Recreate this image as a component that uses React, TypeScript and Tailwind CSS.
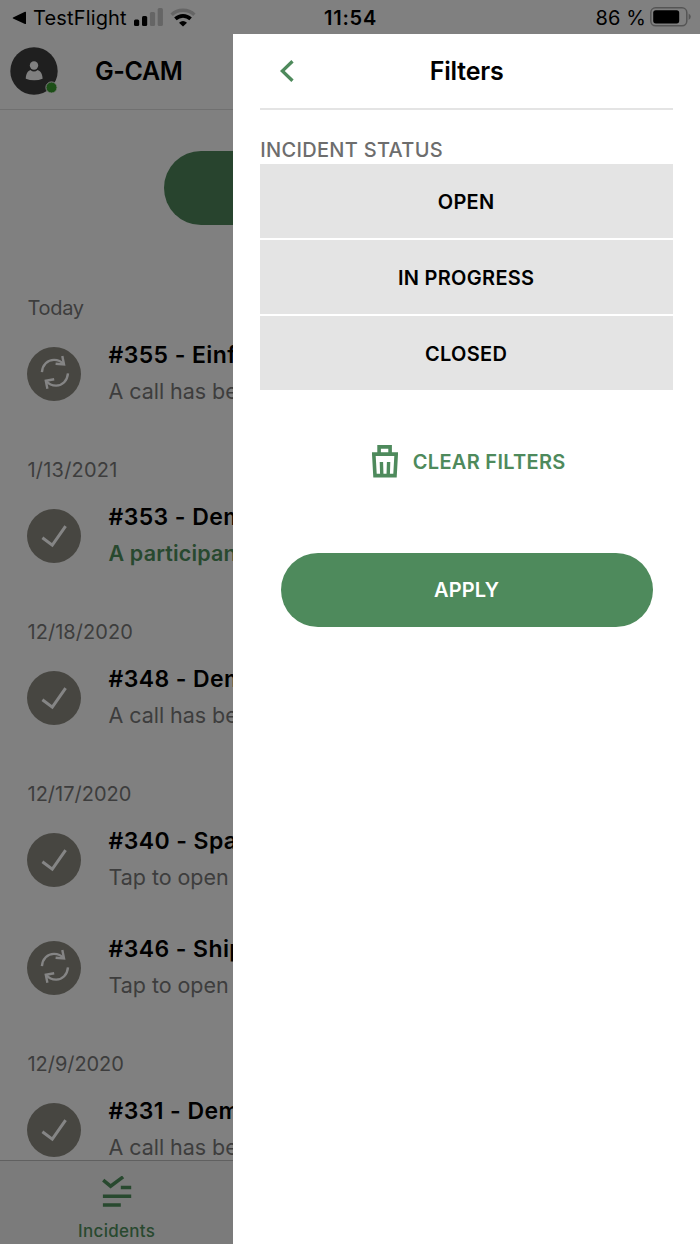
import React from "react";

type Incident = { title: string; note: string; state: "done" | "sync"; unread?: boolean };
type Group = { label: string; spacing: string; items: Incident[] };

const groups: Group[] = [
  { label: "Today", spacing: "tracking-[-0.3px]", items: [{ title: "#355 - Einf", note: "A call has be", state: "sync" }] },
  { label: "1/13/2021", spacing: "tracking-[0.2px]", items: [{ title: "#353 - Dem", note: "A participan", state: "done", unread: true }] },
  { label: "12/18/2020", spacing: "tracking-[0.05px]", items: [{ title: "#348 - Dem", note: "A call has be", state: "done" }] },
  {
    label: "12/17/2020",
    spacing: "tracking-[0px]",
    items: [
      { title: "#340 - Spa", note: "Tap to open", state: "done" },
      { title: "#346 - Ship", note: "Tap to open", state: "sync" },
    ],
  },
  { label: "12/9/2020", spacing: "tracking-[-0.05px]", items: [{ title: "#331 - Dem", note: "A call has be", state: "done" }] },
];

function StateIcon({ state }: { state: Incident["state"] }) {
  return (
    <svg viewBox="0 0 54 54" className="size-[54px] shrink-0" fill="none" stroke="#858585">
      <circle cx="27" cy="27" r="27" fill="#474641" stroke="none" />
      {state === "done" ? (
        <path d="M15.4 28.7 25.3 36.2 38.6 17.2" strokeWidth="3" />
      ) : (
        <g strokeWidth="2.4">
          <path d="M14.9 25.2C15.5 17.8 20.5 12.9 27 12.9C31 12.9 34.3 14.3 37 17.2" />
          <path d="M35.3 9 37 17.4 28.6 16.7" />
          <path d="M41 26.3C40.2 33.8 35.5 38.6 29.2 38.6C25.2 38.6 21.8 37.2 19.1 34" />
          <path d="M27.2 32.2 18.8 33.8 20.4 41.8" />
        </g>
      )}
    </svg>
  );
}

function StatusBar() {
  return (
    <div className="grid h-[34px] shrink-0 grid-cols-3 items-center bg-[#808080] pt-px pr-[9px] pl-[12px] text-[20px]">
      <div className="flex items-center">
        <svg viewBox="0 0 15 14" className="mr-[6px] h-[14px] w-[15px]">
          <path d="M1 6.6 13 .8Q14 .4 14 1.4V12.4Q14 13.4 13 12.9L1 7.4Q.3 7 1 6.6Z" />
        </svg>
        <span className="w-[101px] pt-px tracking-[0.15px] whitespace-nowrap">TestFlight</span>
        <svg viewBox="0 0 29 18" className="mb-px h-[18px] w-[29px]">
          <rect x="0" y="11.4" width="5.2" height="6.6" rx="1.5" />
          <rect x="8" y="8" width="5.2" height="10" rx="1.5" />
          <rect x="15.9" y="4" width="5.2" height="14" rx="1.5" fill="#656565" />
          <rect x="23.7" y="0" width="5.2" height="18" rx="1.5" fill="#656565" />
        </svg>
        <svg viewBox="0 0 26 19" className="mb-px ml-[7px] h-[19px] w-[26px] shrink-0" fill="none">
          <path d="M1.6 6.8C7.8 .7 18.2 .7 24.4 6.8" stroke="#656565" strokeWidth="3.4" />
          <path d="M5.4 10.9C9.8 6.8 16.2 6.8 20.6 10.9" stroke="black" strokeWidth="3.6" />
          <path d="M9 14.7Q13 11.4 17 14.7L13 18.6Z" fill="black" />
        </svg>
      </div>
      <span className="pt-px pr-[2px] text-center font-semibold tracking-[0.75px]">11:54</span>
      <div className="flex items-center justify-end gap-[4px]">
        <span className="pt-px tracking-[0.1px]">86 %</span>
        <svg viewBox="0 0 41 20" className="mb-[2px] h-[20px] w-[41px]">
          <rect x=".8" y=".8" width="36" height="18" rx="4.8" fill="none" stroke="#555555" strokeWidth="1.5" />
          <rect x="3.2" y="3.2" width="26" height="13.2" rx="2.6" />
          <path d="M38.6 6.6Q40.8 8 40.8 9.8T38.6 13Z" fill="#555555" />
        </svg>
      </div>
    </div>
  );
}

function IncidentsPage() {
  return (
    <div className="flex min-h-0 w-[233.3px] shrink-0 flex-col overflow-hidden bg-[#808080]">
      <header className="flex h-[75.5px] shrink-0 items-center border-b-[1.5px] border-[#707070] pl-[10px]">
        <svg viewBox="0 0 48 48" className="size-[48px]">
          <circle cx="24" cy="24" r="23.7" fill="#1f1f1f" />
          <circle cx="24" cy="18.5" r="4.2" fill="#808080" />
          <path d="M15.8 31.7C15.8 26.8 18 23.6 20.4 22.9Q24 26.1 27.6 22.9C30.2 23.6 32.6 26.8 32.6 31.7Q28.8 33.3 24.2 33.3T15.8 31.7Z" fill="#808080" />
          <circle cx="41.5" cy="40.5" r="5.6" fill="#1c4f17" stroke="#808080" strokeWidth="1" />
        </svg>
        <h1 className="ml-[37px] pt-px text-[25px] font-semibold tracking-[-0.4px]">G-CAM</h1>
      </header>
      <div className="flex h-[156.5px] shrink-0 pt-[41.5px] pl-[164px]">
        <div className="h-[74px] w-[372px] shrink-0 rounded-full bg-[#28442e]" />
      </div>
      <main className="min-h-0 flex-1 overflow-hidden">
        {groups.map((group) => (
          <section key={group.label}>
            <h2 className={`h-[54px] pt-[30px] pl-[27.5px] text-[20px] leading-[24px] text-[#3d3d3d] ${group.spacing}`}>{group.label}</h2>
            {group.items.map((item) => (
              <div key={item.title} className="flex h-[108px] items-center gap-[27.5px] pl-[27px]">
                <StateIcon state={item.state} />
                <div className="pb-px whitespace-nowrap">
                  <div className="text-[23px] leading-[37px] font-semibold tracking-[0.4px]">{item.title}</div>
                  <div
                    className={
                      item.unread
                        ? "-mt-px text-[21.5px] leading-[37px] font-semibold tracking-[0.15px] text-[#28492f]"
                        : "-mt-px text-[21.5px] leading-[37px] tracking-[-0.05px] text-[#3d3d3d]"
                    }
                  >
                    {item.note}
                  </div>
                </div>
              </div>
            ))}
          </section>
        ))}
      </main>
      <nav className="flex h-[84px] shrink-0 flex-col items-center border-t border-[#606060] bg-[#7b7b7b] pt-[15px] text-[#28492f]">
        <svg viewBox="0 0 30 32" className="h-[32px] w-[30px]" fill="none" stroke="currentColor" strokeWidth="3.5">
          <path d="M1.2 4.2 8.6 10.2 21.1.9" />
          <path d="M18.8 11.5H29.2M.9 20.3H29.2M.9 29H18.8" />
        </svg>
        <span className="mt-[12px] text-[17px] leading-[22px] font-medium tracking-[0.3px]">Incidents</span>
      </nav>
    </div>
  );
}

function FiltersPanel() {
  return (
    <div className="flex min-w-0 flex-1 flex-col bg-white pr-[27px] pl-[27px]">
      <header className="grid h-[76px] grid-cols-[54px_1fr_54px] items-center border-b-2 border-[#e4e4e4]">
        <svg viewBox="0 0 15 22" className="ml-[20px] h-[22px] w-[15px]" fill="none" stroke="#4e8a5c" strokeWidth="3.3">
          <path d="M12.5 1.2 2.3 11 12.5 20.8" />
        </svg>
        <h1 className="pt-[2px] text-center text-[25px] font-semibold tracking-[-0.2px]">Filters</h1>
      </header>
      <h2 className="mt-[26px] h-[28px] pt-px text-[20px] leading-[26px] font-medium tracking-[0.3px] text-[#6d6d6d]">INCIDENT STATUS</h2>
      <div className="flex flex-col gap-[2px] text-[20px] font-semibold tracking-[0.3px]">
        <button className="h-[74px] bg-[#e4e4e4] pt-[2px] pr-px">OPEN</button>
        <button className="h-[74px] bg-[#e4e4e4] pt-[2px] pr-px">IN PROGRESS</button>
        <button className="h-[74px] bg-[#e4e4e4] pt-[2px] pr-px">CLOSED</button>
      </div>
      <button className="mt-[53px] flex h-[36px] items-center justify-center gap-[15px] pl-[4px] text-[20px] font-semibold tracking-[0.3px] text-[#4e8a5c]">
        <svg viewBox="0 0 26 33" className="h-[33px] w-[26px]" fill="none" stroke="currentColor" strokeWidth="3.6">
          <path d="M7.1 9V1.9H18.1V9" />
          <path d="M1.8 9.1H24.2L23 30.6H3Z" />
          <path d="M9.4 17 9.8 30M16.6 17 16.2 30" strokeWidth="3.4" />
        </svg>
        <span className="pt-[2px]">CLEAR FILTERS</span>
      </button>
      <button className="mx-[20.4px] mt-[74px] h-[74px] rounded-full bg-[#4e8a5c] text-[20px] font-semibold tracking-[0.1px] text-white">APPLY</button>
    </div>
  );
}

export default function App() {
  return (
    <div className="flex h-[1244px] w-[700px] flex-col overflow-hidden font-['Inter',sans-serif] text-black">
      <StatusBar />
      <div className="flex min-h-0 flex-1">
        <IncidentsPage />
        <FiltersPanel />
      </div>
    </div>
  );
}
